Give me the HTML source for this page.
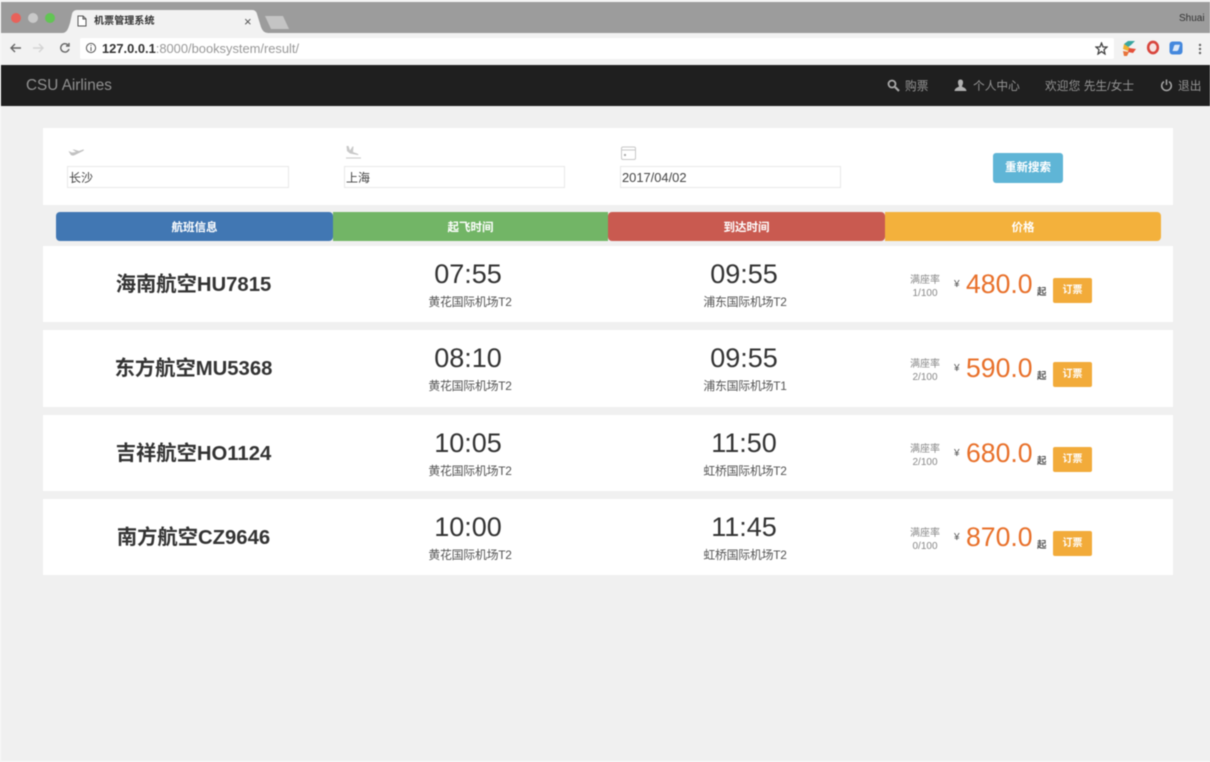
<!DOCTYPE html>
<html lang="zh">
<head>
<meta charset="utf-8">
<title>机票管理系统</title>
<style>
*{box-sizing:border-box}
html,body{margin:0;padding:0}
body{width:1210px;height:762px;overflow:hidden;position:relative;background:#f0f0f0;font-family:"Liberation Sans","Noto Sans CJK SC",sans-serif;color:#333}
#w{position:absolute;inset:0;filter:blur(.5px)}
.a{position:absolute;white-space:nowrap}
.c{text-align:center}
.row{position:absolute;left:43px;width:1130px;height:76px;background:#fff}
.name{position:absolute;left:0;width:301px;top:24px;text-align:center;font-size:20.3px;line-height:30px;font-weight:bold;color:#333}
.t{position:absolute;width:200px;text-align:center;top:12px;font-size:27px;line-height:32px;color:#333}
.p{position:absolute;width:200px;text-align:center;top:48px;font-size:11.9px;line-height:16px;letter-spacing:-.02em;color:#555}
.l1{position:absolute;left:867px;width:30px;text-align:center;top:28px;font-size:10px;line-height:13px;color:#888}
.l2{position:absolute;left:867px;width:30px;text-align:center;top:41px;font-size:10px;line-height:13px;color:#888}
.y{position:absolute;left:911px;top:32px;font-size:10px;line-height:13px;color:#555}
.pr{position:absolute;left:923px;top:20px;font-size:26.6px;line-height:36px;color:#e8702a}
.q{position:absolute;left:994px;top:40px;font-size:9.5px;line-height:13px;font-weight:bold;color:#555}
.b{position:absolute;left:1010px;top:32px;width:39px;height:25px;border-radius:2px;background:#f2ab3a;color:#fff;font-size:10px;font-weight:bold;line-height:25px;text-align:center}
.h{position:absolute;top:212px;height:29px;color:#fff;font-size:11.5px;font-weight:bold;line-height:32px;text-align:center;overflow:hidden}
.inp{position:absolute;top:166px;height:22px;background:#fff;border:1px solid #e8e8e8;font-size:12px;line-height:23px;padding-left:1px;color:#444}
.n{position:absolute;top:79px;font-size:11.7px;line-height:16px;color:#959595;white-space:nowrap}
</style>
</head>
<body>
<div id="w">
<!-- chrome -->
<div class="a" style="left:0;top:0;width:1210px;height:2px;background:#f4f4f4"></div>
<div class="a" style="left:0;top:2px;width:1210px;height:31px;background:#9c9c9c"></div>
<div class="a" style="left:0;top:33px;width:1210px;height:32px;background:#f2f2f2"></div>
<div class="a" style="left:11px;top:13px;width:10px;height:10px;border-radius:50%;background:#e8625a"></div>
<div class="a" style="left:28px;top:13px;width:10px;height:10px;border-radius:50%;background:#c9c9c9"></div>
<div class="a" style="left:45px;top:13px;width:10px;height:10px;border-radius:50%;background:#62c554"></div>
<svg class="a" style="left:60px;top:9px" width="235" height="25" viewBox="0 0 235 25">
<path d="M2 24 C7 24 8 20 10 14 L12 5 Q13 1 17 1 L192 1 Q196 1 197 5 L201 18 Q203 24 208 24 Z" fill="#f2f2f2"/>
<path d="M205 7 L223 7 L229 20 L211 20 Z" fill="#c4c4c4"/>
</svg>
<svg class="a" style="left:77px;top:15px" width="10" height="12" viewBox="0 0 10 12"><path d="M1 1 H6 L9 4 V11 H1 Z M6 1 V4 H9" fill="#fff" stroke="#555" stroke-width="1"/></svg>
<div class="a" style="left:94px;top:15px;font-size:10px;line-height:14px;letter-spacing:.1px;color:#333;font-weight:bold">机票管理系统</div>
<div class="a" style="left:244px;top:15px;font-size:13px;line-height:14px;color:#555">×</div>
<div class="a" style="left:1179px;top:12px;font-size:10px;line-height:14px;color:#333">Shuai</div>
<svg class="a" style="left:9px;top:41px" width="66" height="14" viewBox="0 0 66 14" fill="none" stroke-width="1.4">
<path d="M12 7 H2 M6 3 L2 7 L6 11" stroke="#666"/>
<path d="M24 7 H34 M30 3 L34 7 L30 11" stroke="#d4d4d4"/>
<path d="M59 4 A4.2 4.2 0 1 0 60 8 M60 2 V5 H57" stroke="#666"/>
</svg>
<div class="a" style="left:80px;top:38px;width:1034px;height:21px;background:#fff;border-radius:2px"></div>
<svg class="a" style="left:85px;top:42px" width="12" height="12" viewBox="0 0 12 12" fill="none"><circle cx="6" cy="6" r="4.6" stroke="#555" stroke-width="1"/><path d="M6 5 V9 M6 3 V4" stroke="#555" stroke-width="1"/></svg>
<div class="a" style="left:102px;top:41px;font-size:12.9px;line-height:15px;color:#999"><b style="color:#333">127.0.0.1</b>:8000/booksystem/result/</div>
<svg class="a" style="left:1095px;top:42px" width="13" height="13" viewBox="0 0 13 13"><path d="M6.5 1 L8 5 L12 5 L9 7.7 L10 12 L6.5 9.6 L3 12 L4 7.7 L1 5 L5 5 Z" fill="none" stroke="#444" stroke-width="1.3"/></svg>
<svg class="a" style="left:1121px;top:40px" width="16" height="17" viewBox="0 0 16 17"><path d="M14 1 L7 1 L3 4 L6 8 L10 5 Z" fill="#38a6a0"/><path d="M3 4 L2 9 L7 11 L9 8 Z" fill="#f0b030"/><path d="M8 8 L15 9 L12 13 L7 12 Z" fill="#e4503a"/><path d="M2 11 L8 12 L6 16 L3 16 Z" fill="#e8733a"/></svg>
<svg class="a" style="left:1146px;top:40px" width="14" height="15" viewBox="0 0 14 15"><ellipse cx="7" cy="7.5" rx="4.8" ry="5.6" fill="#f6e4e2" stroke="#d8453c" stroke-width="2.6"/></svg>
<svg class="a" style="left:1169px;top:41px" width="14" height="14" viewBox="0 0 14 14"><rect x="0.5" y="0.5" width="13" height="13" rx="3" fill="#4488dd"/><path d="M3.5 10 L5 5 Q5.4 3.8 6.5 3.8 H11 L9.5 8.5 Q9 10 8 10 Z" fill="#dbe8f8"/></svg>
<svg class="a" style="left:1198px;top:43px" width="4" height="12" viewBox="0 0 4 12"><circle cx="2" cy="2" r="1.2" fill="#666"/><circle cx="2" cy="6" r="1.2" fill="#666"/><circle cx="2" cy="10" r="1.2" fill="#666"/></svg>
<!-- navbar -->
<div class="a" style="left:0;top:65px;width:1210px;height:41px;background:#1f1f1f"></div>
<div class="a" style="left:26px;top:76px;font-size:15.3px;line-height:20px;color:#919191">CSU Airlines</div>
<svg class="a" style="left:887px;top:79px" width="13" height="13" viewBox="0 0 13 13" fill="none"><circle cx="5" cy="5" r="3.5" stroke="#a8a8a8" stroke-width="1.8"/><path d="M8 8 L12 12" stroke="#a8a8a8" stroke-width="2.2"/></svg>
<div class="n" style="left:905px">购票</div>
<svg class="a" style="left:954px;top:79px" width="13" height="13" viewBox="0 0 13 13"><path d="M6.5 0.5 C4.5 0.5 3.8 2 4 4 C4.1 5.6 5 6.5 5 7.5 C4 8.5 .8 8.8 .5 12 H12.5 C12.2 8.8 9 8.5 8 7.5 C8 6.5 8.9 5.6 9 4 C9.2 2 8.5 0.5 6.5 0.5 Z" fill="#b0b0b0"/></svg>
<div class="n" style="left:973px">个人中心</div>
<div class="n" style="left:1045px;letter-spacing:.1px">欢迎您 先生/女士</div>
<svg class="a" style="left:1160px;top:79px" width="13" height="13" viewBox="0 0 13 13" fill="none"><path d="M4 2.6 A4.8 4.8 0 1 0 9 2.6" stroke="#a8a8a8" stroke-width="1.5"/><path d="M6.5 0.5 V6" stroke="#a8a8a8" stroke-width="1.5"/></svg>
<div class="n" style="left:1178px">退出</div>
<!-- search -->
<div class="a" style="left:43px;top:128px;width:1130px;height:77px;background:#fff"></div>
<svg class="a" style="left:67px;top:146px" width="18" height="12" viewBox="0 0 18 12"><path d="M1.5 5 L5 6.5 L9 6 L5.5 3.5 L7 3.5 L12 5 L16 3.5 Q18 3.5 16 5 L8 9 Q5 10.5 3.5 8.5 Z" fill="#c2c2c2"/></svg>
<svg class="a" style="left:344px;top:145px" width="18" height="15" viewBox="0 0 18 15"><path d="M2.5 1 L4.5 1 L6 5.5 L8.5 1.5 L9.5 1.5 L9 7 L13 8.5 Q16 10 13.5 10 L6 8.5 L3 6 Z" fill="#c8c8c8"/><path d="M2 13 H17" stroke="#cfcfcf" stroke-width="1.2"/></svg>
<svg class="a" style="left:620px;top:145px" width="18" height="16" viewBox="0 0 18 16" fill="none"><rect x="1.5" y="2" width="14" height="12.5" rx="1.5" stroke="#c8c8c8"/><path d="M1.5 5 H15.5" stroke="#c8c8c8"/><rect x="4" y="9" width="2" height="2" fill="#aaa"/></svg>
<div class="inp" style="left:67px;width:222px">长沙</div>
<div class="inp" style="left:344px;width:221px">上海</div>
<div class="inp" style="left:620px;width:221px;font-size:12.9px;line-height:21px">2017/04/02</div>
<div class="a c" style="left:993px;top:153px;width:70px;height:30px;border-radius:3px;background:#5fb5d6;color:#fff;font-size:11.5px;line-height:31px;font-weight:bold">重新搜索</div>
<!-- header -->
<div class="h" style="left:56px;width:275px;background:#4177b3;border-radius:4px;width:277px">航班信息</div>
<div class="h" style="left:333px;width:275px;background:#72b566">起飞时间</div>
<div class="h" style="left:608px;width:277px;background:#c95a50;border-radius:4px">到达时间</div>
<div class="h" style="left:885px;width:276px;background:#f3b13c;border-radius:0 4px 4px 0">价格</div>
<!-- rows -->
<div class="row" style="top:246px"><div class="name">海南航空HU7815</div><div class="t" style="left:325px">07:55</div><div class="p" style="left:327px">黄花国际机场T2</div><div class="t" style="left:601px">09:55</div><div class="p" style="left:602px">浦东国际机场T2</div><div class="l1">满座率</div><div class="l2">1/100</div><div class="y">¥</div><div class="pr">480.0</div><div class="q">起</div><div class="b">订票</div></div>
<div class="row" style="top:330px;height:77px"><div class="name">东方航空MU5368</div><div class="t" style="left:325px">08:10</div><div class="p" style="left:327px">黄花国际机场T2</div><div class="t" style="left:601px">09:55</div><div class="p" style="left:602px">浦东国际机场T1</div><div class="l1">满座率</div><div class="l2">2/100</div><div class="y">¥</div><div class="pr">590.0</div><div class="q">起</div><div class="b">订票</div></div>
<div class="row" style="top:415px"><div class="name">吉祥航空HO1124</div><div class="t" style="left:325px">10:05</div><div class="p" style="left:327px">黄花国际机场T2</div><div class="t" style="left:601px">11:50</div><div class="p" style="left:602px">虹桥国际机场T2</div><div class="l1">满座率</div><div class="l2">2/100</div><div class="y">¥</div><div class="pr">680.0</div><div class="q">起</div><div class="b">订票</div></div>
<div class="row" style="top:499px;height:76px"><div class="name">南方航空CZ9646</div><div class="t" style="left:325px">10:00</div><div class="p" style="left:327px">黄花国际机场T2</div><div class="t" style="left:601px">11:45</div><div class="p" style="left:602px">虹桥国际机场T2</div><div class="l1">满座率</div><div class="l2">0/100</div><div class="y">¥</div><div class="pr">870.0</div><div class="q">起</div><div class="b">订票</div></div>
<div class="a" style="left:0;top:0;width:1px;height:762px;background:#fafafa"></div>
<div class="a" style="left:0;top:761px;width:1210px;height:1px;background:#fafafa"></div>
</div>
</body>
</html>
